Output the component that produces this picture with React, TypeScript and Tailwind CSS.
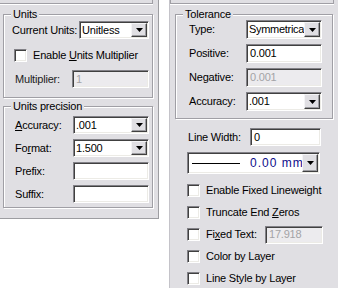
import React from "react";

// classic win32 property page: two panels of grouped dimension settings

const sunken =
  "border border-t-[#828187] border-l-[#828187] border-b-white border-r-white shadow-[inset_1px_1px_0_#404040,inset_-1px_-1px_0_#ecebe6]";

function DropButton() {
  return (
    <div className="w-[16px] h-full shrink-0 flex items-center justify-center bg-[#e0dfe3] border border-t-[#f4f4f6] border-l-[#f4f4f6] border-b-[#404040] border-r-[#404040] shadow-[inset_-1px_-1px_0_#9d9da1]">
      <svg width="7" height="4" viewBox="0 0 7 4">
        <path d="M0 0h7L3.5 4z" fill="#000" />
      </svg>
    </div>
  );
}

function Combo({ value, className }: { value: string; className: string }) {
  return (
    <div className={`${sunken} bg-white flex items-stretch p-[1px] shrink-0 ${className}`}>
      <div className="flex-1 overflow-hidden whitespace-nowrap pl-[1px] flex items-center">{value}</div>
      <DropButton />
    </div>
  );
}

function TextBox({ value, disabled, className }: { value: string; disabled?: boolean; className: string }) {
  return (
    <div
      className={`${sunken} flex items-center pl-[3px] shrink-0 whitespace-nowrap overflow-hidden ${
        disabled ? "bg-[#ecebee] text-[#a3a3a6]" : "bg-white"
      } ${className}`}
    >
      {value}
    </div>
  );
}

function CheckBox() {
  return <div className={`${sunken} w-[13px] h-[13px] bg-white shrink-0`} />;
}

function Group({ title, className, legendClass, children }: { title: string; className: string; legendClass?: string; children: React.ReactNode }) {
  return (
    <fieldset className={`border border-[#a09fa5] shadow-[inset_1px_1px_0_#fff,1px_1px_0_#fff] ${className}`}>
      <legend className={`ml-[7px] px-[2px] bg-[#e0dfe3] whitespace-nowrap ${legendClass ?? "leading-[13px]"}`}>{title}</legend>
      {children}
    </fieldset>
  );
}

export default function App() {
  return (
    <div className="w-[338px] h-[288px] bg-white flex items-start overflow-hidden font-['Liberation_Sans',Arial,sans-serif] text-[11px] tracking-[-0.2px] text-black">
      {/* left panel */}
      <div className="w-[159px] h-[219px] shrink-0 bg-[#e0dfe3] border-r border-b border-[#9d9da1] flex flex-col">
        <div className="h-[4px] w-[153px] border-b border-r border-[#a09fa5] shadow-[0_1px_0_#fff]" />

        <Group title="Units" className="mt-[4px] ml-[3px] w-[150px] pb-[9px]">
          <div className="h-[18px] flex items-center">
            <span className="ml-[8px] whitespace-nowrap">Current Units:</span>
            <Combo value="Unitless" className="ml-auto mr-[3px] w-[70px] h-[18px]" />
          </div>
          <div className="mt-[10px] h-[13px] flex items-center">
            <div className="ml-[10px]">
              <CheckBox />
            </div>
            <span className="ml-[6px] whitespace-nowrap">
              Enable <u>U</u>nits Multiplier
            </span>
          </div>
          <div className="mt-[8px] h-[18px] flex items-center">
            <span className="ml-[11px] text-[#222] whitespace-nowrap">Multiplier:</span>
            <TextBox value="1" disabled className="ml-auto mr-[3px] w-[77px] h-[18px]" />
          </div>
        </Group>

        <Group title="Units precision" className="mt-[2px] ml-[3px] w-[150px] pt-[3px] pb-[4px]">
          <div className="flex flex-col gap-[5px]">
            <div className="h-[18px] flex items-center">
              <span className="ml-[11px]">
                <u>A</u>ccuracy:
              </span>
              <Combo value=".001" className="ml-auto mr-[3px] w-[76px] h-[18px]" />
            </div>
            <div className="h-[18px] flex items-center">
              <span className="ml-[11px]">
                Fo<u>r</u>mat:
              </span>
              <Combo value="1.500" className="ml-auto mr-[3px] w-[76px] h-[18px]" />
            </div>
            <div className="h-[18px] flex items-center">
              <span className="ml-[11px]">Prefix:</span>
              <TextBox value="" className="ml-auto mr-[3px] w-[76px] h-[18px]" />
            </div>
            <div className="h-[18px] flex items-center">
              <span className="ml-[11px]">Suffix:</span>
              <TextBox value="" className="ml-auto mr-[3px] w-[76px] h-[18px]" />
            </div>
          </div>
        </Group>
      </div>

      {/* right panel */}
      <div className="ml-[10px] w-[169px] h-[288px] shrink-0 bg-[#e0dfe3] border-l border-[#c4c3c9] flex flex-col">
        <div className="h-[4px] w-[164px] border-b border-l border-r border-[#a09fa5] shadow-[0_1px_0_#fff]" />

        <Group title="Tolerance" legendClass="leading-[12px]" className="mt-[4px] ml-[5px] w-[158px] pb-[7px]">
          <div className="flex flex-col gap-[5px]">
            <div className="h-[19px] flex items-center">
              <span className="ml-[13px]">Type:</span>
              <Combo value="Symmetrica" className="ml-auto mr-[10px] w-[76px] h-[19px] tracking-[-0.3px]" />
            </div>
            <div className="h-[19px] flex items-center">
              <span className="ml-[13px]">Positive:</span>
              <TextBox value="0.001" className="ml-auto mr-[10px] w-[76px] h-[19px]" />
            </div>
            <div className="h-[19px] flex items-center">
              <span className="ml-[13px]">Negative:</span>
              <TextBox value="0.001" disabled className="ml-auto mr-[10px] w-[76px] h-[19px]" />
            </div>
            <div className="h-[19px] flex items-center">
              <span className="ml-[13px]">Accuracy:</span>
              <Combo value=".001" className="ml-auto mr-[10px] w-[76px] h-[19px]" />
            </div>
          </div>
        </Group>

        <div className="mt-[9px] h-[18px] flex items-center">
          <span className="ml-[18px] whitespace-nowrap">Line Width:</span>
          <TextBox value="0" className="ml-auto mr-[17px] w-[71px] h-[18px]" />
        </div>

        <div className={`${sunken} mt-[6px] ml-[17px] w-[133px] h-[22px] bg-white flex items-stretch p-[1px]`}>
          <div className="flex-1 flex items-center overflow-hidden whitespace-nowrap">
            <div className="ml-[3px] w-[48px] h-[1px] bg-black shrink-0" />
            <span className="ml-[10px] text-[12px] tracking-[1px] text-[#0c0c8a]">0.00 mm</span>
          </div>
          <DropButton />
        </div>

        <div className="mt-[8px] flex flex-col gap-[5px]">
          <div className="h-[17px] flex items-center">
            <div className="ml-[17px]">
              <CheckBox />
            </div>
            <span className="ml-[6px] whitespace-nowrap">Enable Fixed Lineweight</span>
          </div>
          <div className="h-[17px] flex items-center">
            <div className="ml-[17px]">
              <CheckBox />
            </div>
            <span className="ml-[6px] whitespace-nowrap">
              Truncate End <u>Z</u>eros
            </span>
          </div>
          <div className="h-[17px] flex items-center">
            <div className="ml-[17px]">
              <CheckBox />
            </div>
            <span className="ml-[6px] whitespace-nowrap">
              Fi<u>x</u>ed Text:
            </span>
            <TextBox value="17.918" disabled className="ml-auto mr-[15px] w-[58px] h-[18px]" />
          </div>
          <div className="h-[17px] flex items-center">
            <div className="ml-[17px]">
              <CheckBox />
            </div>
            <span className="ml-[6px] whitespace-nowrap">Color by Layer</span>
          </div>
          <div className="h-[17px] flex items-center">
            <div className="ml-[17px]">
              <CheckBox />
            </div>
            <span className="ml-[6px] whitespace-nowrap">Line Style by Layer</span>
          </div>
        </div>
      </div>
    </div>
  );
}
